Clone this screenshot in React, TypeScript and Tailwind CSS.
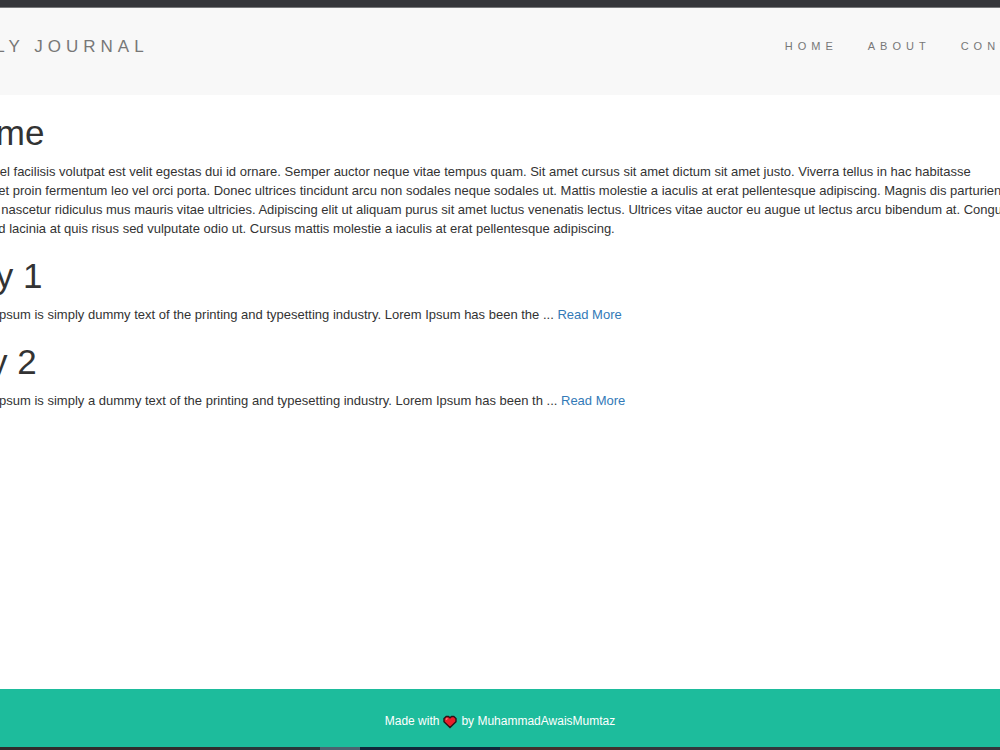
const links = ["Home", "About", "Contact"];

const posts = [
  { title: "Day 1", text: "Lorem Ipsum is simply dummy text of the printing and typesetting industry. Lorem Ipsum has been the ..." },
  { title: "day 2", text: "Lorem Ipsum is simply a dummy text of the printing and typesetting industry. Lorem Ipsum has been th ..." },
];

const intro = [
  "Lacus vel facilisis volutpat est velit egestas dui id ornare. Semper auctor neque vitae tempus quam. Sit amet cursus sit amet dictum sit amet justo. Viverra tellus in hac habitasse",
  "Imperdiet proin fermentum leo vel orci porta. Donec ultrices tincidunt arcu non sodales neque sodales ut. Mattis molestie a iaculis at erat pellentesque adipiscing. Magnis dis parturient",
  "montes nascetur ridiculus mus mauris vitae ultricies. Adipiscing elit ut aliquam purus sit amet luctus venenatis lectus. Ultrices vitae auctor eu augue ut lectus arcu bibendum at. Congue",
  "Euismod lacinia at quis risus sed vulputate odio ut. Cursus mattis molestie a iaculis at erat pellentesque adipiscing.",
];

function Heart() {
  return (
    <svg className="h-[14px] w-[14px]" viewBox="0 0 14 14" role="img" aria-label="love">
      <path d="M7 12.5 1 6.8V3.5L3.2 1.5h2.2L7 2.9 8.6 1.5h2.2L13 3.5v3.3z" fill="#e8202a" stroke="#2b1416" strokeWidth="1.4" />
      <path d="M3 4.6 4.4 3.3" stroke="#ff8b8b" strokeWidth="1.2" />
    </svg>
  );
}

export default function App() {
  return (
    <div className="flex min-h-screen flex-col overflow-x-hidden bg-white font-['Liberation_Sans',Arial,sans-serif] text-[13px] leading-[19px] text-[#333333]">
      <div className="h-2 border-b border-[#77787a] bg-[#35363a]" />
      <header className="-mx-12 flex justify-between bg-[#f8f8f8] pb-[38px] pt-[29px] uppercase text-[#777777]">
        <a href="#home" className="text-[17px] leading-5 tracking-[5px]">Daily Journal</a>
        <nav className="flex gap-[30px] text-[11px] leading-[18px] tracking-[5px]">
          {links.map((link) => (
            <a key={link} href={"#" + link.toLowerCase()}>{link}</a>
          ))}
        </nav>
      </header>

      <main className="-mx-[49px] flex-1 whitespace-nowrap pt-[19px]">
        <h1 className="text-[35px] leading-[38px]">Home</h1>
        <p className="mt-[10px] pl-1">
          {intro.map((line) => (
            <span key={line} className="block">{line}</span>
          ))}
        </p>
        {posts.map((post) => (
          <article key={post.title} className="mt-[19px]">
            <h1 className="text-[35px] leading-[38px]">{post.title}</h1>
            <p className="mt-[10px] pl-1">
              {post.text} <a href="#post" className="text-[#337ab7]">Read More</a>
            </p>
          </article>
        ))}
      </main>

      <footer className="flex items-center justify-center gap-1 bg-[#1dbc9c] pb-[16px] pt-[23px] text-[12px] leading-[19px] text-white">
        <span>Made with</span>
        <Heart />
        <span>by MuhammadAwaisMumtaz</span>
      </footer>
      <div className="flex h-[3px] bg-[#33363c]">
        <div className="w-[22%] bg-[#302c2c]" />
        <div className="w-[10%] bg-[#28383a]" />
        <div className="w-[4%] bg-[#4a6470]" />
        <div className="w-[14%] bg-[#10283a]" />
        <div className="w-[12%] bg-[#44302d]" />
      </div>
    </div>
  );
}
